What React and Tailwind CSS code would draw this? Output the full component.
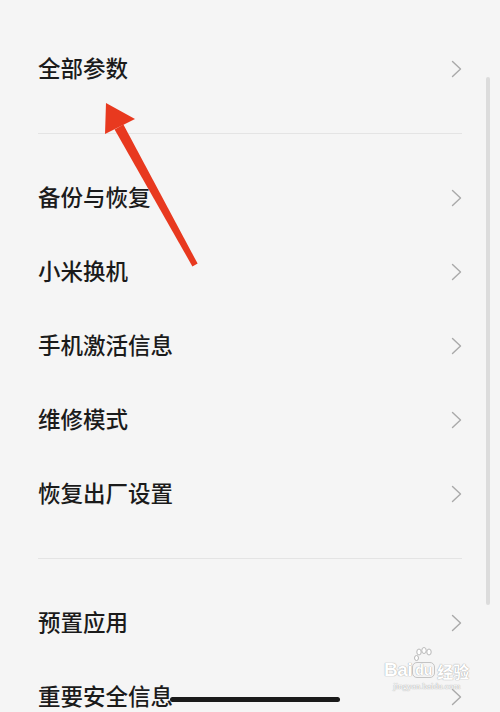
import React from 'react';

const groups = [
  ['全部参数'],
  ['备份与恢复', '小米换机', '手机激活信息', '维修模式', '恢复出厂设置'],
  ['预置应用', '重要安全信息'],
];

const Chevron = () => (
  <svg width="11" height="18" viewBox="0 0 11 18" fill="none">
    <path d="M1.5 1.5 L9.5 9 L1.5 16.5" stroke="#a9a9a9" strokeWidth="1.4" strokeLinecap="round" strokeLinejoin="round" />
  </svg>
);

const Row = ({ label }) => (
  <div className="h-[74px] flex items-center justify-between">
    <span className="text-[22.5px] font-medium text-[#1b1b1b] leading-none -mt-[3px]">{label}</span>
    <Chevron />
  </div>
);

export default function App() {
  return (
    <div
      className="relative w-[500px] h-[712px] overflow-hidden bg-[#f5f5f5]"
      style={{ fontFamily: '"Noto Sans CJK SC", "Noto Sans", sans-serif' }}
    >
      <div className="px-[38px] pt-[32px]">
        {groups.map((items, gi) => (
          <div key={gi}>
            {gi > 0 && <div className="h-px bg-[#e4e4e4] my-[27px]" />}
            {items.map((label) => (
              <Row key={label} label={label} />
            ))}
          </div>
        ))}
      </div>

      {/* scrollbar */}
      <div className="absolute right-[10px] top-[77px] w-[4px] h-[528px] rounded-full bg-[#dcdcdc]" />

      {/* red arrow annotation */}
      <svg className="absolute inset-0" width="500" height="712" viewBox="0 0 500 712">
        <polygon points="123.4,124.6 114.6,129.4 192.4,266.4 197.6,263.6" fill="#e8391f" />
        <polygon points="106,103 135,119 105,134" fill="#e8391f" />
      </svg>

      {/* baidu watermark */}
      <div className="absolute left-[384px] top-[660px] flex flex-col items-center text-white [text-shadow:0_0_1px_#a8a8a8,0_0_1px_#a8a8a8]">
        <div className="flex items-end leading-none" style={{ fontFamily: '"Liberation Sans", "Noto Sans CJK SC", sans-serif' }}>
          <span className="text-[19px] font-bold tracking-tight">Bai</span>
          <span className="relative text-[14px] font-bold px-[2px] rounded-[5px] border border-[#c4c4c4] mb-[1px]">
            du
            <svg className="absolute -top-[16px] left-[1px]" width="20" height="16" viewBox="0 0 20 16" fill="white" stroke="#b8b8b8" strokeWidth="1">
              <ellipse cx="5" cy="5" rx="2.2" ry="3" />
              <ellipse cx="10" cy="3.5" rx="2.2" ry="3" />
              <ellipse cx="15" cy="5" rx="2.2" ry="3" />
              <ellipse cx="2.5" cy="11" rx="2" ry="2.5" />
            </svg>
          </span>
          <span className="text-[16px] font-bold ml-[2px]" style={{ fontFamily: '"Noto Sans CJK SC", sans-serif' }}>经验</span>
        </div>
        <span className="text-[9px] leading-none mt-[3px]" style={{ fontFamily: '"Liberation Serif", serif' }}>jingyan.baidu.com</span>
      </div>

      {/* home indicator */}
      <div className="absolute left-[170px] top-[697px] w-[170px] h-[5px] rounded-full bg-[#1a1a1a]" />
    </div>
  );
}
